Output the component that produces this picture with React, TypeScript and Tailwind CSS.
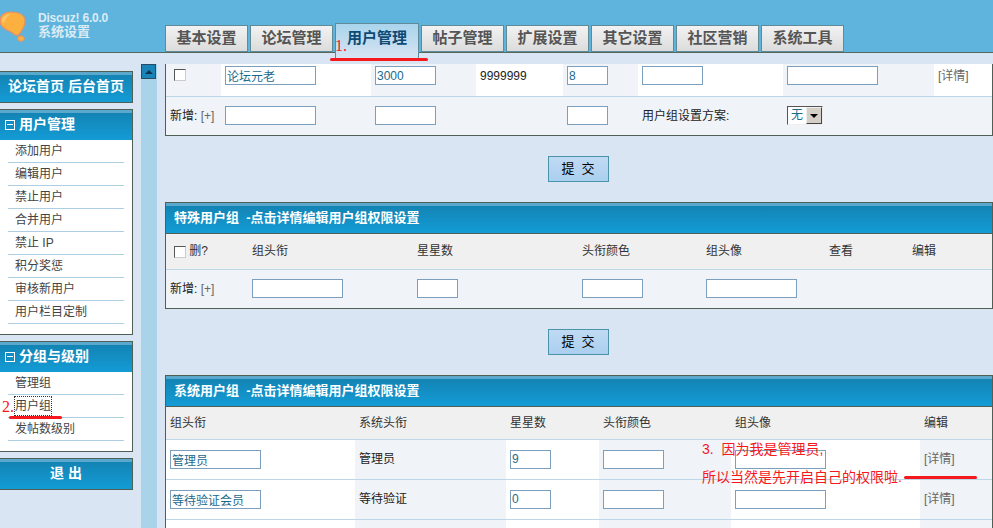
const tabs = ["基本设置", "论坛管理", "用户管理", "帖子管理", "扩展设置", "其它设置", "社区营销", "系统工具"];
const userMenu = ["添加用户", "编辑用户", "禁止用户", "合并用户", "禁止 IP", "积分奖惩", "审核新用户", "用户栏目定制"];
const groupMenu = ["管理组", "用户组", "发帖数级别"];

const inputCls =
  "block h-[19px] border border-[#7b9fbd] bg-white px-[1px] text-[12px] leading-none text-[#1b6a8c] outline-none";
const cellCls = "p-0 pl-[4px] align-middle text-[12px] border-b border-[#bcd8e8]";

function TextBox({ width, value = "" }: { width: string; value?: string }) {
  return <input readOnly value={value} className={`${inputCls} ${width}`} />;
}

function CheckBox() {
  return (
    <span className="inline-block h-[12px] w-[12px] border border-t-[#555] border-l-[#555] border-r-[#ccc] border-b-[#ccc] bg-white align-middle" />
  );
}

function BlueBar({ children, className = "" }: { children: React.ReactNode; className?: string }) {
  return (
    <div className={`border-t-[3px] border-t-[#5aa9cd] bg-gradient-to-b from-[#1384b4] to-[#139cd6] pb-[4px] font-bold text-white ${className}`}>
      {children}
    </div>
  );
}

function SideBox({ title, items }: { title: string; items: string[] }) {
  return (
    <div className="border border-l-0 border-[#4f5f55] bg-white pb-[10px]">
      <BlueBar className="flex h-[30px] items-center gap-[4px] pl-[5px] text-[14px]">
        <span className="flex h-[10px] w-[10px] items-center justify-center border border-white">
          <span className="h-px w-[6px] bg-white" />
        </span>
        {title}
      </BlueBar>
      {items.map((item) => (
        <div key={item} className="mx-[8px] flex h-[23px] items-center border-b border-[#aecfe3] pl-[7px] text-[12px] text-[#444]">
          <span className={item === "用户组" ? "outline-1 outline-dotted outline-[#333]" : ""}>{item}</span>
        </div>
      ))}
    </div>
  );
}

function SubmitButton() {
  return (
    <div className="flex justify-center py-[20px] pr-[2px]">
      <button className="h-[26px] w-[61px] border border-[#4a93a8] bg-gradient-to-b from-[#c0daf3] to-[#aacff0] text-[13px] text-black">
        提&nbsp;&nbsp;交
      </button>
    </div>
  );
}

function Panel({ title, children }: { title?: string; children: React.ReactNode }) {
  return (
    <div className={`border border-[#4f5f55] bg-white ${title ? "" : "border-t-0"}`}>
      {title && (
        <BlueBar className="flex h-[31px] items-center border-b border-b-[#4f5f55] pl-[8px] text-[13px]">{title}</BlueBar>
      )}
      {children}
    </div>
  );
}

function Logo() {
  return (
    <svg width="28" height="34" viewBox="0 0 28 34" className="mt-[10px] shrink-0">
      <path
        d="M0 11 C0 5 5 2 11 2 C19 2 25 5 25 11 C25 17 22 20 20 23 C18 26 16 26 14 24 C11 21 7 21 4 18 C1 16 0 14 0 11 Z"
        fill="#fbb040"
        stroke="#e98f63"
        strokeWidth="1.2"
      />
      <path d="M2 11 C2 7 6 4 11 4 C7 6 5 9 4 14 Z" fill="#fcc76a" />
      <ellipse cx="21" cy="28.5" rx="3.3" ry="2.8" fill="#fbb040" stroke="#e98f63" />
    </svg>
  );
}

export default function App() {
  return (
    <div className="relative h-[528px] w-[993px] overflow-hidden bg-[#d9e5f3] font-['Liberation_Sans','Noto_Sans_CJK_SC',sans-serif]">
      {/* Top bar */}
      <div className="relative z-10 flex h-[53px] border-b border-[#56695f] bg-[#5fb4de]">
        <Logo />
        <div className="ml-[10px] mt-[11px] w-[127px] text-[12px] font-bold leading-[14px] text-[#dcebf3]">
          <div className="tracking-[-0.2px]">Discuz! 6.0.0</div>
          <div className="text-[13px]">系统设置</div>
        </div>
        <div className="flex items-start gap-[2px] pt-[25px]">
          {tabs.map((tab) =>
            tab === "用户管理" ? (
              <div
                key={tab}
                className="-mt-[2px] flex h-[37px] w-[84px] justify-center border border-b-0 border-[#5f8a98] bg-gradient-to-b from-[#a9d4ec] to-[#d9e5f3] pt-[3px] text-[15px] font-bold text-[#0f4a74]"
              >
                {tab}
              </div>
            ) : (
              <div
                key={tab}
                className="flex h-[27px] w-[83px] items-center justify-center border border-[#5f8a98] bg-gradient-to-b from-[#f2f2f2] to-[#dcdcdc] text-[15px] font-bold text-[#555]"
              >
                {tab}
              </div>
            ),
          )}
        </div>
      </div>

      <div className="flex h-[475px]">
        {/* Left menu */}
        <div className="flex w-[133px] shrink-0 flex-col gap-[6px] pt-[18px]">
          <div className="border border-l-0 border-[#4f5f55]">
            <BlueBar className="flex h-[30px] items-center justify-center text-[14px]">论坛首页&nbsp;后台首页</BlueBar>
          </div>
          <SideBox title="用户管理" items={userMenu} />
          <SideBox title="分组与级别" items={groupMenu} />
          <div className="border border-l-0 border-[#4f5f55]">
            <BlueBar className="flex h-[30px] items-center justify-center text-[14px]">退&nbsp;出</BlueBar>
          </div>
        </div>

        {/* Scroll strip */}
        <div className="ml-[8px] mt-[11px] flex h-[475px] w-[16px] shrink-0 flex-col justify-between bg-[#a8d3e8]">
          <div className="flex h-[15px] w-[15px] items-center justify-center border border-[#2c4a63] bg-[#1a83b8]">
            <span className="h-0 w-0 border-x-[4px] border-b-[4px] border-x-transparent border-b-[#0d3553]" />
          </div>
          <div className="flex h-[15px] w-[15px] translate-y-[6px] items-center justify-center border border-[#2c4a63] bg-[#1a83b8]">
            <span className="h-0 w-0 border-x-[4px] border-t-[4px] border-x-transparent border-t-[#0d3553]" />
          </div>
        </div>

        {/* Main */}
        <div className="ml-[8px] flex-1 overflow-hidden pt-[11px]">
          <Panel>
            <table className="w-full table-fixed border-collapse">
              <colgroup>
                <col className="w-[55px]" />
                <col className="w-[150px]" />
                <col className="w-[105px]" />
                <col className="w-[87px]" />
                <col className="w-[75px]" />
                <col className="w-[145px]" />
                <col className="w-[151px]" />
                <col />
              </colgroup>
              <tbody>
                <tr className="h-[32px] text-[#222]">
                  <td className={`${cellCls} bg-[#f0f3f7] !pl-[8px] !align-top pt-[5px]`}><div className="flex"><CheckBox /></div></td>
                  <td className={`${cellCls} !align-top pt-[2px]`}><TextBox width="w-[91px]" value="论坛元老" /></td>
                  <td className={`${cellCls} bg-[#f0f3f7] !align-top pt-[2px]`}><TextBox width="w-[61px]" value="3000" /></td>
                  <td className={`${cellCls} !align-top pt-[3px]`}>9999999</td>
                  <td className={`${cellCls} bg-[#f0f3f7] !align-top pt-[2px]`}><TextBox width="w-[41px]" value="8" /></td>
                  <td className={`${cellCls} !align-top pt-[2px]`}><TextBox width="w-[61px]" /></td>
                  <td className={`${cellCls} bg-[#f0f3f7] !align-top pt-[2px]`}><TextBox width="w-[91px]" /></td>
                  <td className={`${cellCls} !align-top pt-[3px] text-[#666]`}>[详情]</td>
                </tr>
                <tr className="h-[39px] bg-[#f0f3f7] text-[#222]">
                  <td className="p-0 pl-[4px] text-[12px]">新增: <span className="text-[#666]">[+]</span></td>
                  <td className="p-0 pl-[4px]"><TextBox width="w-[91px]" /></td>
                  <td className="p-0 pl-[4px]"><TextBox width="w-[61px]" /></td>
                  <td />
                  <td className="p-0 pl-[4px]"><TextBox width="w-[41px]" /></td>
                  <td className="p-0 pl-[4px] text-[12px]">用户组设置方案:</td>
                  <td className="p-0 pl-[4px]">
                    <div className="flex h-[19px] w-[36px] border border-t-[#555] border-l-[#555] border-r-[#eee] border-b-[#eee] bg-white">
                      <span className="flex-1 pl-[3px] text-[12px] leading-[17px] text-[#1b6a8c]">无</span>
                      <span className="flex w-[16px] items-center justify-center border border-t-[#eee] border-l-[#eee] border-r-[#444] border-b-[#444] bg-[#d4d0c8]">
                        <span className="h-0 w-0 border-x-[4px] border-t-[4px] border-x-transparent border-t-black" />
                      </span>
                    </div>
                  </td>
                  <td />
                </tr>
              </tbody>
            </table>
          </Panel>

          <SubmitButton />

          <Panel title={"特殊用户组 \u00a0-点击详情编辑用户组权限设置"}>
            <table className="w-full table-fixed border-collapse">
              <colgroup>
                <col className="w-[82px]" />
                <col className="w-[165px]" />
                <col className="w-[165px]" />
                <col className="w-[124px]" />
                <col className="w-[123px]" />
                <col className="w-[83px]" />
                <col />
              </colgroup>
              <tbody>
                <tr className="h-[35px] bg-[#f0f0f0] text-[#333]">
                  <td className={`${cellCls} !pl-[8px]`}><CheckBox /> 删?</td>
                  <td className={cellCls}>组头衔</td>
                  <td className={cellCls}>星星数</td>
                  <td className={cellCls}>头衔颜色</td>
                  <td className={cellCls}>组头像</td>
                  <td className={cellCls}>查看</td>
                  <td className={cellCls}>编辑</td>
                </tr>
                <tr className="h-[39px] bg-[#f0f3f7] text-[#222]">
                  <td className="p-0 pl-[4px] text-[12px]">新增: <span className="text-[#666]">[+]</span></td>
                  <td className="p-0 pl-[4px]"><TextBox width="w-[91px]" /></td>
                  <td className="p-0 pl-[4px]"><TextBox width="w-[41px]" /></td>
                  <td className="p-0 pl-[4px]"><TextBox width="w-[61px]" /></td>
                  <td className="p-0 pl-[4px]"><TextBox width="w-[91px]" /></td>
                  <td />
                  <td />
                </tr>
              </tbody>
            </table>
          </Panel>

          <SubmitButton />

          <Panel title={"系统用户组 \u00a0-点击详情编辑用户组权限设置"}>
            <table className="w-full table-fixed border-collapse">
              <colgroup>
                <col className="w-[189px]" />
                <col className="w-[151px]" />
                <col className="w-[93px]" />
                <col className="w-[132px]" />
                <col className="w-[189px]" />
                <col />
              </colgroup>
              <tbody>
                <tr className="h-[32px] bg-[#f0f0f0] text-[#333]">
                  <td className={cellCls}>组头衔</td>
                  <td className={cellCls}>系统头衔</td>
                  <td className={cellCls}>星星数</td>
                  <td className={cellCls}>头衔颜色</td>
                  <td className={cellCls}>组头像</td>
                  <td className={cellCls}>编辑</td>
                </tr>
                {[
                  ["管理员", "管理员", "9"],
                  ["等待验证会员", "等待验证", "0"],
                ].map(([name, sys, stars]) => (
                  <tr key={sys} className="h-[40px] text-[#222]">
                    <td className={cellCls}><TextBox width="w-[91px]" value={name} /></td>
                    <td className={`${cellCls} bg-[#f0f3f7]`}>{sys}</td>
                    <td className={cellCls}><TextBox width="w-[41px]" value={stars} /></td>
                    <td className={`${cellCls} bg-[#f0f3f7]`}><TextBox width="w-[61px]" /></td>
                    <td className={cellCls}><TextBox width="w-[91px]" /></td>
                    <td className={`${cellCls} bg-[#f0f3f7] text-[#666]`}>[详情]</td>
                  </tr>
                ))}
                <tr className="h-[40px]">
                  <td className={cellCls} />
                  <td className={`${cellCls} bg-[#f0f3f7]`} />
                  <td className={cellCls} />
                  <td className={`${cellCls} bg-[#f0f3f7]`} />
                  <td className={cellCls} />
                  <td className={`${cellCls} bg-[#f0f3f7]`} />
                </tr>
              </tbody>
            </table>
          </Panel>
        </div>
      </div>

      {/* Red notes drawn over the screenshot */}
      <span className="absolute left-[335px] top-[38px] z-20 font-['Liberation_Serif',serif] text-[16px] leading-[16px] text-[#f5181c]">1.</span>
      <span className="absolute left-[330px] top-[58px] z-20 h-[3px] w-[98px] rounded-full bg-[#f5181c]" />
      <span className="absolute left-[2px] top-[399px] z-20 font-['Liberation_Serif',serif] text-[16px] leading-[16px] text-[#f5181c]">2.</span>
      <span className="absolute left-[9px] top-[416px] z-20 h-[3px] w-[53px] rounded-full bg-[#f5181c]" />
      <span className="absolute left-[702px] top-[441px] z-20 text-[14px] leading-[16px] text-[#f5181c]">3.&nbsp;&nbsp;因为我是管理员,</span>
      <span className="absolute left-[702px] top-[469px] z-20 text-[14px] leading-[16px] text-[#f5181c]">所以当然是先开启自己的权限啦.</span>
      <span className="absolute left-[904px] top-[476px] z-20 h-[3px] w-[73px] rounded-full bg-[#f5181c]" />
    </div>
  );
}
